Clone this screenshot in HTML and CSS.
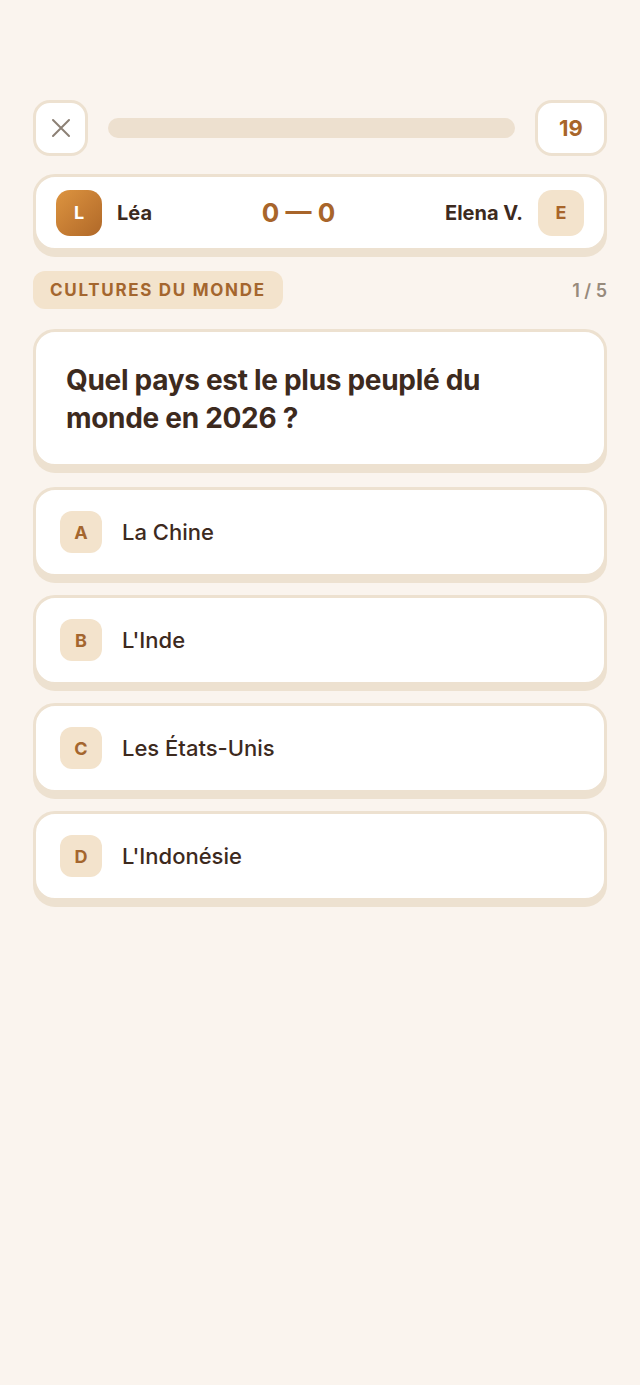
FILE: index.html
```html
<!DOCTYPE html>
<html lang="fr">
<head>
    <meta charset="UTF-8">
    <meta name="viewport" content="width=device-width, initial-scale=1.0">
    <title>Quiz | Duel</title>
    <link rel="stylesheet" href="styles.css">
</head>
<body>
    <div class="screen">
        <!-- Top bar -->
        <div class="top-bar">
            <button class="close-btn" aria-label="Fermer">
                <svg width="22" height="22" viewBox="0 0 22 22">
                    <path d="M3 3 L19 19 M19 3 L3 19" stroke="#8c8075" stroke-width="2" stroke-linecap="round" fill="none"/>
                </svg>
            </button>
            <div class="progress"><div class="progress-fill"></div></div>
            <div class="timer">19</div>
        </div>

        <!-- Score card -->
        <div class="card score-card">
            <div class="player">
                <div class="avatar avatar-me">L</div>
                <span class="player-name">Léa</span>
            </div>
            <div class="score">0 — 0</div>
            <div class="player">
                <span class="player-name">Elena V.</span>
                <div class="avatar avatar-opp">E</div>
            </div>
        </div>

        <!-- Category -->
        <div class="meta-row">
            <span class="category">Cultures du monde</span>
            <span class="counter">1 / 5</span>
        </div>

        <!-- Question -->
        <div class="card question-card">
            <h1 class="question">Quel pays est le plus peuplé du monde en 2026 ?</h1>
        </div>

        <!-- Answers -->
        <div class="answers">
            <button class="card answer"><span class="letter">A</span><span class="answer-text">La Chine</span></button>
            <button class="card answer"><span class="letter">B</span><span class="answer-text">L'Inde</span></button>
            <button class="card answer"><span class="letter">C</span><span class="answer-text">Les États-Unis</span></button>
            <button class="card answer"><span class="letter">D</span><span class="answer-text">L'Indonésie</span></button>
        </div>
    </div>
</body>
</html>
```

FILE: styles.css
```css
body {
    margin: 0;
    padding: 0;
    background-color: #faf4ee;
    font-family: Inter, "Noto Sans", sans-serif;
    color: #3d2a1e;
}

.screen {
    padding: 100px 33px 40px;
}

/* Top bar */
.top-bar {
    display: flex;
    align-items: center;
    gap: 20px;
}

.close-btn {
    width: 55px;
    height: 56px;
    box-sizing: border-box;
    border: 3px solid #ede1d0;
    border-radius: 17px;
    background: #fff;
    display: flex;
    align-items: center;
    justify-content: center;
    padding: 0;
}

.progress {
    flex: 1;
    height: 20px;
    background: #ede0cf;
    border-radius: 10px;
}

.progress-fill {
    width: 0;
}

.timer {
    width: 72px;
    height: 56px;
    box-sizing: border-box;
    border: 3px solid #ede1d0;
    border-radius: 17px;
    background: #fff;
    display: flex;
    align-items: center;
    justify-content: center;
    font-size: 22px;
    font-weight: 700;
    color: #a8652a;
}

/* Cards */
.card {
    background: #fff;
    border: 3px solid #ede1d0;
    border-radius: 22px;
    box-shadow: 0 6px 0 #ede1d0;
    box-sizing: border-box;
}

.score-card {
    margin-top: 18px;
    height: 77px;
    padding: 0 20px;
    display: flex;
    align-items: center;
    justify-content: space-between;
}

.player {
    display: flex;
    align-items: center;
    gap: 15px;
}

.player-name {
    font-size: 20px;
    font-weight: 700;
}

.avatar {
    width: 46px;
    height: 46px;
    border-radius: 14px;
    display: flex;
    align-items: center;
    justify-content: center;
    font-size: 18px;
    font-weight: 700;
}

.avatar-me {
    background: linear-gradient(135deg, #dd9440, #b06828);
    color: #fff;
}

.avatar-opp {
    background: #f3e3cc;
    color: #a8652a;
}

.score {
    font-size: 26px;
    font-weight: 700;
    color: #a8652a;
}

/* Category row */
.meta-row {
    margin-top: 20px;
    display: flex;
    align-items: center;
    justify-content: space-between;
}

.category {
    background: #f3e3cc;
    color: #a4662e;
    font-size: 17px;
    font-weight: 700;
    letter-spacing: 1.7px;
    text-transform: uppercase;
    padding: 0 17px;
    height: 38px;
    line-height: 38px;
    border-radius: 12px;
}

.counter {
    font-size: 18px;
    font-weight: 600;
    color: #978a7c;
}

/* Question */
.question-card {
    margin-top: 20px;
    padding: 29px 30px 27px;
}

.question {
    margin: 0;
    font-size: 28px;
    line-height: 38px;
    font-weight: 700;
    letter-spacing: -0.3px;
    max-width: 470px;
}

/* Answers */
.answers {
    margin-top: 20px;
    display: flex;
    flex-direction: column;
    gap: 18px;
}

.answer {
    width: 100%;
    height: 90px;
    padding: 0 24px;
    display: flex;
    align-items: center;
    gap: 20px;
    font-family: inherit;
    color: inherit;
    text-align: left;
}

.letter {
    width: 42px;
    height: 42px;
    flex-shrink: 0;
    border-radius: 12px;
    background: #f3e3cc;
    color: #a4662e;
    font-size: 18px;
    font-weight: 700;
    display: flex;
    align-items: center;
    justify-content: center;
}

.answer-text {
    font-size: 22px;
    font-weight: 500;
}
```
